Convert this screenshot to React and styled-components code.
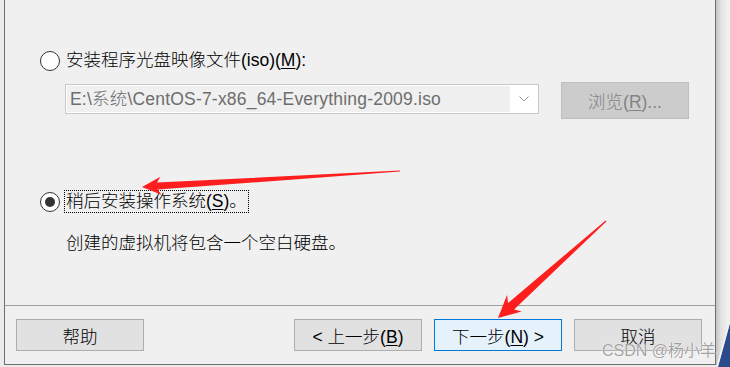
import styled, { createGlobalStyle } from "styled-components";

const GlobalStyle = createGlobalStyle`
  html, body {
    margin: 0;
    padding: 0;
    background: #f0f0f0;
  }
  body {
    font-family: "Liberation Sans", "Noto Sans CJK SC", sans-serif;
    color: #000;
  }
`;

// tapered annotation arrow, tip first
const arrowPoints = (tail, tip, { head = 20, wing = 9, neck = 3.5, tailW = 0.6 } = {}) => {
  const dx = tail[0] - tip[0];
  const dy = tail[1] - tip[1];
  const len = Math.hypot(dx, dy);
  const ux = dx / len;
  const uy = dy / len;
  const nx = -uy;
  const ny = ux;
  const at = (t, s) => [tip[0] + ux * t + nx * s, tip[1] + uy * t + ny * s];
  const pts = [
    at(0, 0),
    at(head, wing),
    at(head * 0.8, neck),
    [tail[0] + nx * tailW, tail[1] + ny * tailW],
    [tail[0] - nx * tailW, tail[1] - ny * tailW],
    at(head * 0.8, -neck),
    at(head, -wing),
  ];
  return pts.map((p) => p.map((v) => v.toFixed(1)).join(",")).join(" ");
};

const U = ({ children }) => <Key>{children}</Key>;

const App = () => {
  return (
    <>
      <GlobalStyle />
      <Desktop>
        <Window>
          <Content>
            <RadioRow $top={49}>
              <Radio />
              <RadioLabel>
                安装程序光盘映像文件(iso)(<U>M</U>):
              </RadioLabel>
            </RadioRow>
            <IsoRow>
              <Combo>
                <ComboText>E:\系统\CentOS-7-x86_64-Everything-2009.iso</ComboText>
                <ComboArrow>
                  <svg width="10" height="6" viewBox="0 0 10 6">
                    <path d="M0.5 0.5 L5 5 L9.5 0.5" fill="none" stroke="#9a9a9a" strokeWidth="1" />
                  </svg>
                </ComboArrow>
              </Combo>
              <BrowseButton disabled>
                浏览(<U>R</U>)...
              </BrowseButton>
            </IsoRow>
            <RadioRow $top={71}>
              <Radio $checked />
              <RadioLabel $focused>
                稍后安装操作系统(<U>S</U>)。
              </RadioLabel>
            </RadioRow>
            <Hint>创建的虚拟机将包含一个空白硬盘。</Hint>
          </Content>
          <Footer>
            <Button>帮助</Button>
            <Spacer />
            <Button>
              &lt; 上一步(<U>B</U>)
            </Button>
            <Button $primary>
              下一步(<U>N</U>) &gt;
            </Button>
            <Button>取消</Button>
          </Footer>
        </Window>
        <Shadow>
          <Wallpaper width="14" height="46" viewBox="0 0 14 46">
            <polygon points="2,46 14,2 14,46" fill="#2b4b8c" />
            <polygon points="0,46 2,46 14,2 14,0" fill="#ffffff" opacity="0.7" />
          </Wallpaper>
        </Shadow>
        <Marks width="730" height="367" viewBox="0 0 730 367">
          <polygon
            points={arrowPoints([400, 171], [142, 187], { head: 19, wing: 9, neck: 3.5, tailW: 0.6 })}
            fill="#ff1e1e"
          />
          <polygon
            points={arrowPoints([606, 221], [498, 318], { head: 22, wing: 11, neck: 4.5, tailW: 0.6 })}
            fill="#ff1e1e"
          />
        </Marks>
        <Watermark>CSDN @杨小羊</Watermark>
      </Desktop>
    </>
  );
};

const Desktop = styled.div`
  position: relative;
  width: 730px;
  height: 367px;
  overflow: hidden;
  display: flex;
  align-items: flex-start;
  background: #ececec;
`;

const Window = styled.div`
  box-sizing: border-box;
  width: 712px;
  height: 365px;
  margin-left: 4px;
  border: 1px solid #6f6f6f;
  border-top: none;
  background: #f0f0f0;
  display: flex;
  flex-direction: column;
  font-size: 17.5px;
  font-weight: 300;
`;

const Content = styled.div`
  box-sizing: border-box;
  height: 306px;
  padding-left: 35px;
  border-bottom: 1px solid #a0a0a0;
  display: flex;
  flex-direction: column;
  align-items: flex-start;
`;

const RadioRow = styled.div`
  display: flex;
  align-items: center;
  height: 23px;
  margin-top: ${(p) => p.$top}px;
`;

const Radio = styled.span`
  box-sizing: border-box;
  width: 20px;
  height: 20px;
  border-radius: 50%;
  border: 1.5px solid #333;
  background: #fff;
  display: flex;
  align-items: center;
  justify-content: center;

  &::after {
    content: "";
    width: 10px;
    height: 10px;
    border-radius: 50%;
    background: #333;
    display: ${(p) => (p.$checked ? "block" : "none")};
  }
`;

const RadioLabel = styled.span`
  margin-left: 4px;
  padding: 0 1px;
  line-height: 21px;
  border: 1px ${(p) => (p.$focused ? "dotted #000" : "solid transparent")};
  white-space: nowrap;
`;

const Key = styled.span`
  text-decoration: underline;
  text-underline-offset: 2px;
`;

const IsoRow = styled.div`
  display: flex;
  align-items: flex-start;
  margin-top: 10px;
  margin-left: 25px;
`;

const Combo = styled.div`
  box-sizing: border-box;
  width: 474px;
  height: 30px;
  margin-top: 2px;
  border: 1px solid #c8c8c8;
  background: #fff;
  padding: 1px;
  display: flex;
`;

const ComboText = styled.div`
  flex: 1;
  background: #f0f0f0;
  color: #6d6d6d;
  line-height: 26px;
  padding-left: 3px;
  letter-spacing: 0.2px;
  white-space: nowrap;
  overflow: hidden;
`;

const ComboArrow = styled.div`
  width: 27px;
  display: flex;
  align-items: center;
  justify-content: center;
`;

const BrowseButton = styled.button`
  box-sizing: border-box;
  width: 128px;
  height: 37px;
  margin-left: 22px;
  border: 1px solid #bfbfbf;
  background: #cccccc;
  color: #838383;
  font: inherit;
  padding: 0;
`;

const Hint = styled.div`
  margin-top: 20px;
  margin-left: 26px;
  line-height: 20px;
`;

const Footer = styled.div`
  flex: 1;
  display: flex;
  align-items: flex-start;
  gap: 12px;
  padding: 13px 13px 0 11px;
`;

const Spacer = styled.div`
  flex: 1;
`;

const Button = styled.button`
  box-sizing: border-box;
  width: 128px;
  height: 32px;
  padding: 0;
  border: 1px solid ${(p) => (p.$primary ? "#0078d7" : "#adadad")};
  background: ${(p) => (p.$primary ? "#e5f1fb" : "#e1e1e1")};
  color: #000;
  font: inherit;
  white-space: nowrap;
`;

const Shadow = styled.div`
  position: relative;
  flex: 1;
  align-self: stretch;
  background: linear-gradient(to right, #c4c4c4, #e2e2e2 35%, #f4f4f4);
`;

const Wallpaper = styled.svg`
  position: absolute;
  right: 0;
  bottom: 0;
  display: block;
`;

const Marks = styled.svg`
  position: absolute;
  left: 0;
  top: 0;
  pointer-events: none;
`;

const Watermark = styled.div`
  position: absolute;
  left: 602px;
  top: 341px;
  font-family: "Liberation Sans", "Noto Sans CJK SC", sans-serif;
  font-size: 16px;
  line-height: 20px;
  color: rgba(120, 120, 120, 0.7);
  text-shadow: 0 0 1px #fff, 0 0 1px #fff;
  white-space: nowrap;
  pointer-events: none;
`;

export default App;
